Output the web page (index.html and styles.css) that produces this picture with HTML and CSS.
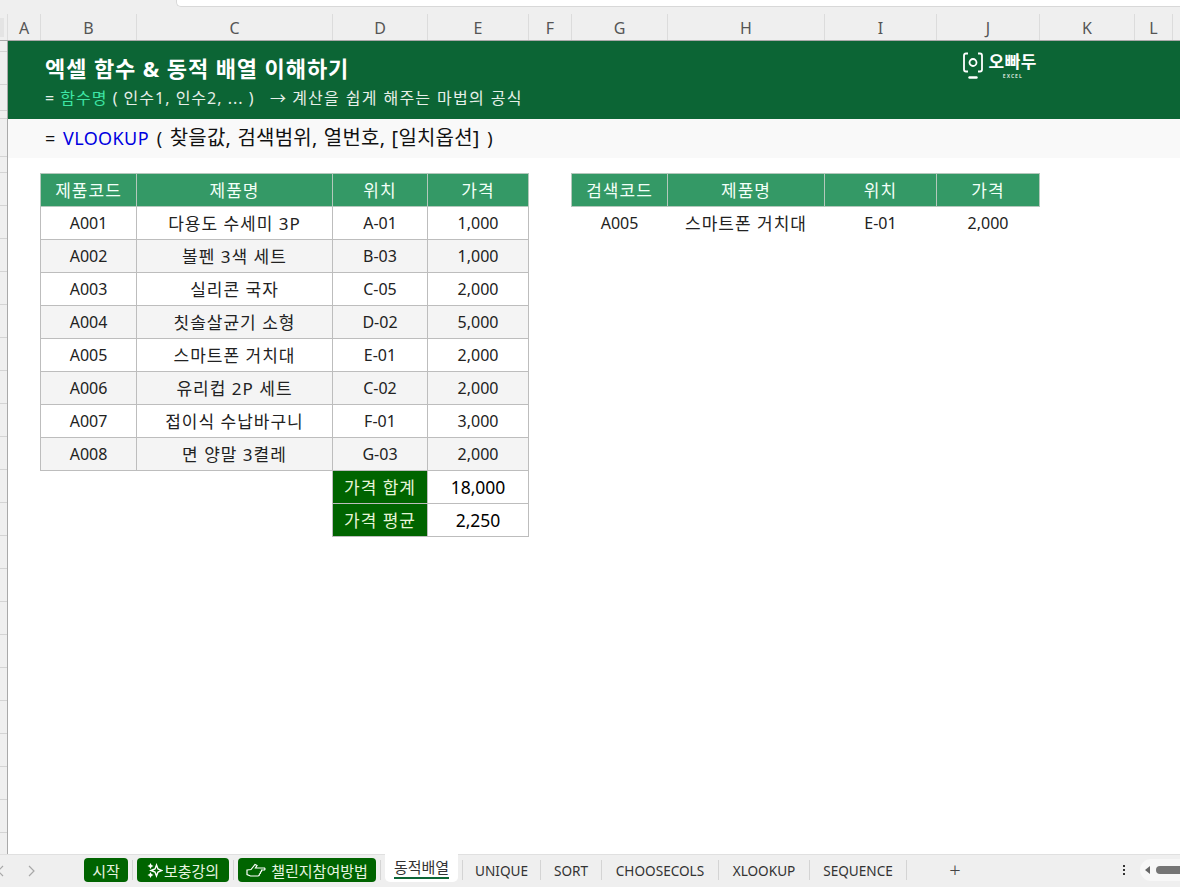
FILE: index.html

```html
<!DOCTYPE html>
<html lang="ko">
<head>
  <meta charset="UTF-8">
  <title>동적배열</title>
  <link rel="stylesheet" href="styles.css">
</head>
<body>
  <div class="top-bar">
    <div class="formula-row">
      <div class="formula-input"></div>
    </div>
    <div class="col-heads">
      <div class="corner"></div>
      <div class="col w-a">A</div>
      <div class="col w-b">B</div>
      <div class="col w-c">C</div>
      <div class="col w-d">D</div>
      <div class="col w-e">E</div>
      <div class="col w-f">F</div>
      <div class="col w-g">G</div>
      <div class="col w-h">H</div>
      <div class="col w-i">I</div>
      <div class="col w-j">J</div>
      <div class="col w-k">K</div>
      <div class="col w-l">L</div>
    </div>
  </div>

  <div class="main">
    <div class="row-heads">
      <div class="row-head h-a"></div>
      <div class="row-head h-b"></div>
      <div class="row-head h-c"></div>
      <div class="row-head h-d"></div>
      <div class="row-head h-e"></div>
      <div class="row-head h-f"></div>
      <div class="row-rest"></div>
    </div>

    <div class="sheet">
      <div class="banner">
        <div class="banner-text">
          <h1>엑셀 함수 &amp; 동적 배열 이해하기</h1>
          <p>= <span class="mint">함수명</span> ( 인수1, 인수2, ... ) &nbsp; → <span class="tagline">계산을 쉽게 해주는 마법의 공식</span></p>
        </div>
        <div class="logo">
          <svg class="logo-mark" width="20" height="28" viewBox="0 0 20 28" fill="none" stroke="#fff" stroke-width="1.800">
            <path d="M5 1.500H3Q1 1.500 1 3.500V17.500Q1 19.500 3 19.500H5"/>
            <path d="M15 1.500H17Q19 1.500 19 3.500V17.500Q19 19.500 17 19.500H15"/>
            <circle cx="10" cy="10.500" r="3.500"/>
            <path d="M6.500 25.500H13.500" stroke-width="2.400" stroke-linecap="round"/>
          </svg>
          <div class="logo-text">
            <div class="logo-name">오빠두</div>
            <div class="logo-sub">EXCEL</div>
          </div>
        </div>
      </div>

      <div class="syntax">= <span class="blue">VLOOKUP</span> ( <span class="args">찾을값, 검색범위, 열번호, [일치옵션]</span> )</div>

      <div class="tables">
        <table class="data">
          <colgroup>
            <col class="t-b"><col class="t-c"><col class="t-d"><col class="t-e">
          </colgroup>
          <tr class="head"><th>제품코드</th><th>제품명</th><th>위치</th><th>가격</th></tr>
          <tr><td>A001</td><td class="ko">다용도 수세미 3P</td><td>A-01</td><td>1,000</td></tr>
          <tr class="alt"><td>A002</td><td class="ko">볼펜 3색 세트</td><td>B-03</td><td>1,000</td></tr>
          <tr><td>A003</td><td class="ko">실리콘 국자</td><td>C-05</td><td>2,000</td></tr>
          <tr class="alt"><td>A004</td><td class="ko">칫솔살균기 소형</td><td>D-02</td><td>5,000</td></tr>
          <tr><td>A005</td><td class="ko">스마트폰 거치대</td><td>E-01</td><td>2,000</td></tr>
          <tr class="alt"><td>A006</td><td class="ko">유리컵 2P 세트</td><td>C-02</td><td>2,000</td></tr>
          <tr><td>A007</td><td class="ko">접이식 수납바구니</td><td>F-01</td><td>3,000</td></tr>
          <tr class="alt"><td>A008</td><td class="ko">면 양말 3켤레</td><td>G-03</td><td>2,000</td></tr>
          <tr class="sum"><td class="blank" colspan="2"></td><td class="sum-label ko">가격 합계</td><td class="sum-value">18,000</td></tr>
          <tr class="sum"><td class="blank" colspan="2"></td><td class="sum-label ko">가격 평균</td><td class="sum-value">2,250</td></tr>
        </table>

        <table class="data lookup">
          <colgroup>
            <col class="t-g"><col class="t-h"><col class="t-i"><col class="t-j">
          </colgroup>
          <tr class="head"><th>검색코드</th><th>제품명</th><th>위치</th><th>가격</th></tr>
          <tr class="plain"><td>A005</td><td class="ko">스마트폰 거치대</td><td>E-01</td><td>2,000</td></tr>
        </table>
      </div>
    </div>
  </div>

  <div class="tab-bar">
    <div class="nav">
      <svg width="8" height="12" viewBox="0 0 8 12" fill="none" stroke="#a8a8a8" stroke-width="1.200"><path d="M7 1L2 6L7 11"/></svg>
      <svg width="8" height="12" viewBox="0 0 8 12" fill="none" stroke="#a8a8a8" stroke-width="1.200"><path d="M1 1L6 6L1 11"/></svg>
    </div>
    <div class="tab colored t1">시작</div>
    <i class="sep"></i>
    <div class="tab colored t2">
      <svg width="16" height="17" viewBox="0 0 16 17" fill="#fff" stroke="#fff" stroke-width="1.400">
        <path d="M9.500 3L11 7L15 8.500L11 10L9.500 14L8 10L4 8.500L8 7Z" fill="none"/>
        <path d="M3.500 1L4.500 3L6.500 4L4.500 5L3.500 7L2.500 5L.5 4L2.500 3Z" stroke="none"/>
        <path d="M3.500 10L4.500 12L6.500 13L4.500 14L3.500 16L2.500 14L.5 13L2.500 12Z" stroke="none"/>
      </svg>보충강의
    </div>
    <i class="sep"></i>
    <div class="tab colored t3">
      <svg width="20" height="14" viewBox="0 0 20 14" fill="none" stroke="#fff" stroke-width="1.200">
        <path d="M1 7L5 6.500L9 1.500L11 2.500L9.500 5H18.500Q19.500 6 18.500 7H15.500Q16 8.500 14.500 9Q15 10.500 13.500 11Q13.500 13 12 13H4.500L1 11.500Z"/>
      </svg>챌린지참여방법
    </div>
    <i class="sep"></i>
    <div class="tab active"><span>동적배열</span></div>
    <i class="sep"></i>
    <div class="plain-tabs">
      <div class="tab t-u">UNIQUE</div>
      <i class="sep"></i>
      <div class="tab t-s">SORT</div>
      <i class="sep"></i>
      <div class="tab t-c2">CHOOSECOLS</div>
      <i class="sep"></i>
      <div class="tab t-x">XLOOKUP</div>
      <i class="sep"></i>
      <div class="tab t-q">SEQUENCE</div>
      <i class="sep"></i>
    </div>
    <div class="plus">+</div>
    <div class="dots"><b></b><b></b><b></b></div>
    <div class="scroller">
      <span class="arrow"></span>
      <span class="thumb"></span>
    </div>
  </div>
</body>
</html>
```

FILE: styles.css

```css
* {
  box-sizing: border-box;
}

body {
  margin: 0;
  height: 887px;
  overflow: hidden;
  display: flex;
  flex-direction: column;
  background: #ffffff;
  font-family: "Noto Sans", "Noto Sans CJK KR", sans-serif;
  font-size: 15px;
  color: #222;
}

/* top of the window */
.top-bar {
  height: 41px;
  flex: none;
  background: #efefef;
  border-bottom: 1px solid #a9a9a9;
}

.formula-row {
  height: 14px;
  padding-left: 176px;
}

.formula-input {
  height: 7px;
  background: #fff;
  border-left: 1px solid #d8d8d8;
  border-bottom: 1px solid #d8d8d8;
  border-bottom-left-radius: 5px;
}

.col-heads {
  display: flex;
  height: 26px;
}

.corner {
  width: 8px;
  border-right: 1px solid #ddd;
  background: linear-gradient(#e4e4e4, #e4e4e4) 0 4px / 4px 19px no-repeat;
}

.col {
  display: flex;
  align-items: center;
  justify-content: center;
  border-right: 1px solid #dcdcdc;
  color: #555;
  font-size: 16px;
  line-height: 1;
  padding-top: 1px;
}

.w-a { width: 33px; }
.w-b { width: 96px; }
.w-c { width: 196px; }
.w-d { width: 95px; }
.w-e { width: 101px; }
.w-f { width: 43px; }
.w-g { width: 96px; }
.w-h { width: 157px; }
.w-i { width: 112px; }
.w-j { width: 103px; }
.w-k { width: 95px; }
.w-l { width: 38px; }

.main {
  flex: 1;
  display: flex;
  min-height: 0;
}

.row-heads {
  width: 8px;
  flex: none;
  background: #efefef;
  border-right: 1px solid #a9a9a9;
  display: flex;
  flex-direction: column;
}

.row-head {
  border-bottom: 1px solid #d4d4d4;
}

.h-a { height: 11px; }
.h-b { height: 33px; }
.h-c { height: 26px; }
.h-d { height: 8px; }
.h-e { height: 38px; }
.h-f { height: 16px; }

.row-rest {
  flex: 1;
  background: repeating-linear-gradient(#efefef 0, #efefef 32px, #d4d4d4 32px, #d4d4d4 33px);
}

.sheet {
  flex: 1;
  min-width: 0;
}

.banner {
  height: 78px;
  background: #0c6535;
  color: #fff;
  display: flex;
  justify-content: space-between;
  padding: 12px 143px 0 37px;
}

.banner h1 {
  margin: 0;
  font-size: 22px;
  line-height: 30px;
  font-weight: 700;
  letter-spacing: 0.9px;
}

.banner p {
  margin: 4px 0 0;
  font-size: 16px;
  line-height: 22px;
  letter-spacing: 1px;
  color: #e6efe9;
}

.mint {
  color: #3ee6a6;
}

.tagline {
  letter-spacing: 1.2px;
  word-spacing: 0.5px;
}

.logo {
  display: flex;
  gap: 6px;
  margin-top: -1px;
  color: #fff;
}

.logo-name {
  font-size: 17px;
  font-weight: 700;
  line-height: 20px;
  letter-spacing: 0.5px;
}

.logo-sub {
  font-size: 5px;
  line-height: 6px;
  margin-top: 1px;
  text-align: center;
  letter-spacing: 1px;
  font-weight: 700;
  color: #cfe0d6;
}

.syntax {
  height: 39px;
  background: #f9f9f9;
  padding-left: 37px;
  font-size: 18px;
  line-height: 37px;
  word-spacing: 3px;
  color: #111;
}

.blue {
  color: #0000e0;
  letter-spacing: 0.4px;
}

.args {
  font-size: 20px;
  letter-spacing: 0.2px;
  word-spacing: 1px;
}

.tables {
  display: flex;
  align-items: flex-start;
  gap: 42px;
  padding: 15px 0 0 32px;
}

.data {
  border-collapse: collapse;
  table-layout: fixed;
  font-size: 16px;
}

.t-b { width: 96px; }
.t-c { width: 196px; }
.t-d { width: 95px; }
.t-e { width: 101px; }
.t-g { width: 96px; }
.t-h { width: 157px; }
.t-i { width: 112px; }
.t-j { width: 103px; }

.data tr {
  height: 33px;
}

.data th,
.data td {
  padding: 0;
  text-align: center;
  font-weight: 400;
  border: 1px solid #bdbdbd;
  color: #222;
}

.data .head th {
  background: #349966;
  color: #f2fff8;
  border-color: #b4c8bc;
  font-size: 17px;
  letter-spacing: 1px;
  padding-bottom: 1px;
}

.data .ko {
  font-size: 17px;
  letter-spacing: 1px;
  padding-bottom: 2px;
}

.alt td {
  background: #f4f4f4;
}

.data .blank {
  border-left: none;
  border-bottom: none;
}

.data .sum .blank {
  border-top: 1px solid #bdbdbd;
}

.data .sum + .sum .blank {
  border-top: none;
}

.data .sum-label {
  background: #006400;
  color: #e6f5d8;
}

.data .sum-value {
  color: #000;
  font-size: 17.5px;
}

.data .plain td {
  border: none;
}

/* sheet tabs */
.tab-bar {
  height: 33px;
  flex: none;
  background: #efefef;
  border-top: 1px solid #e0e0e0;
  padding-bottom: 2px;
  display: flex;
  align-items: center;
  font-size: 15px;
  color: #333;
}

.nav {
  width: 88px;
  display: flex;
  gap: 24px;
  margin-left: -4px;
  padding-top: 1px;
}

.tab {
  height: 24px;
  display: flex;
  align-items: center;
  justify-content: center;
  white-space: nowrap;
}

.colored {
  background: #006400;
  color: #e8f5e0;
  border-radius: 4px;
}

.t1 { width: 44px; }
.t2 { width: 92px; gap: 1px; }
.t3 { width: 138px; gap: 5px; }

.sep {
  width: 1px;
  height: 20px;
  background: #d4d4d4;
  margin: 0 4px;
}

.active {
  width: 73px;
  height: 28px;
  margin-top: -1px;
  align-self: flex-start;
  background: #fff;
  border-radius: 0 0 5px 5px;
}

.active span {
  border-bottom: 2px solid #0c6535;
  line-height: 20px;
}

.plain-tabs {
  display: flex;
  align-items: center;
  margin-left: -4px;
  font-size: 13.6px;
}

.plain-tabs .sep {
  margin: 0;
}

.t-u { width: 77px; }
.t-s { width: 60px; }
.t-c2 { width: 116px; }
.t-x { width: 90px; }
.t-q { width: 96px; }

.plus {
  width: 20px;
  margin-left: 38px;
  text-align: center;
  font-size: 20px;
  line-height: 20px;
  font-weight: 300;
  color: #444;
}

.dots {
  margin-left: 158px;
  display: flex;
  flex-direction: column;
  gap: 2px;
}

.dots b {
  width: 2px;
  height: 2px;
  background: #333;
}

.scroller {
  margin-left: 15px;
  flex: 1;
  height: 22px;
  background: #f7f7f7;
  border-radius: 11px 0 0 11px;
  display: flex;
  align-items: center;
  gap: 6px;
  padding-left: 5px;
}

.arrow {
  width: 0;
  height: 0;
  border-style: solid;
  border-width: 4px 5px 4px 0;
  border-color: transparent #666 transparent transparent;
}

.thumb {
  flex: 1;
  height: 8px;
  background: #757575;
  border-radius: 4px 0 0 4px;
}
```
